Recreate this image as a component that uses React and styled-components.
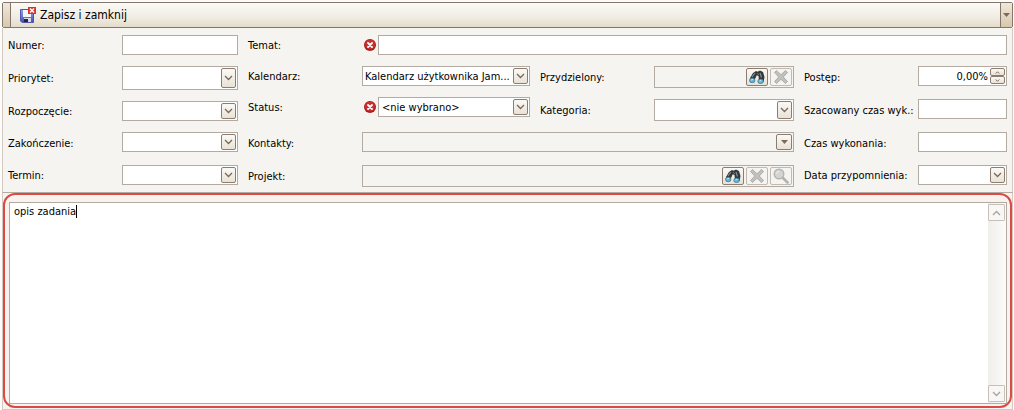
import React, { useLayoutEffect, useRef, useState } from 'react';
import styled, { createGlobalStyle } from 'styled-components';

const App = () => {
  return (
    <Page>
      <GlobalStyle />
      <Toolbar>
        <Grip />
        <ToolButton type="button">
          <SaveCloseIcon />
          Zapisz i zamknij
        </ToolButton>
        <Overflow type="button" aria-label="Więcej">
          <DownTriangle />
        </Overflow>
      </Toolbar>
      <Form>
        <Column>
          <TextField id="numer" label="Numer:" />
          <ComboField id="priorytet" label="Priorytet:" tall />
          <ComboField id="rozpoczecie" label="Rozpoczęcie:" />
          <ComboField id="zakonczenie" label="Zakończenie:" loose />
          <ComboField id="termin" label="Termin:" />
        </Column>
        <Column>
          <TextField id="temat" label="Temat:" error />
          <Details>
            <Column>
              <Pair>
                <Column>
                  <ComboField
                    id="kalendarz"
                    label="Kalendarz:"
                    value="Kalendarz użytkownika Jam..."
                  />
                  <ComboField id="status" label="Status:" value="<nie wybrano>" error />
                </Column>
                <Column>
                  <LookupField id="przydzielony" label="Przydzielony:" />
                  <ComboField id="kategoria" label="Kategoria:" loose medium />
                </Column>
              </Pair>
              <Row $loose>
                <Label htmlFor="kontakty">Kontakty:</Label>
                <Box $muted>
                  <Input id="kontakty" readOnly />
                  <DropButton type="button" aria-label="Wybierz kontakty">
                    <DownTriangle />
                  </DropButton>
                </Box>
              </Row>
              <LookupField id="projekt" label="Projekt:" preview />
            </Column>
            <Column>
              <Row $loose>
                <Label htmlFor="postep">Postęp:</Label>
                <Box>
                  <Input id="postep" defaultValue="0,00%" $right />
                  <Spinner>
                    <SpinButton type="button" aria-label="Zwiększ">
                      <Chevron up small />
                    </SpinButton>
                    <SpinButton type="button" aria-label="Zmniejsz">
                      <Chevron small />
                    </SpinButton>
                  </Spinner>
                </Box>
              </Row>
              <TextField id="szacowany" label="Szacowany czas wyk.:" loose />
              <TextField id="czas" label="Czas wykonania:" loose />
              <ComboField id="przypomnienie" label="Data przypomnienia:" />
            </Column>
          </Details>
        </Column>
      </Form>
      <Description />
    </Page>
  );
};

export default App;

const TextField = ({ id, label, error, loose }) => (
  <Row $loose={loose}>
    <Label htmlFor={id}>{label}</Label>
    {error && <ErrorIcon />}
    <Box>
      <Input id={id} />
    </Box>
  </Row>
);

const ComboField = ({ id, label, value = '', error, tall, medium, loose }) => (
  <Row $loose={loose}>
    <Label htmlFor={id}>{label}</Label>
    {error && <ErrorIcon />}
    <Combo $tall={tall} $medium={medium}>
      <Select id={id} $inset={error}>
        <option>{value}</option>
      </Select>
      <ComboArrow aria-hidden="true">
        <Chevron />
      </ComboArrow>
    </Combo>
  </Row>
);

const LookupField = ({ id, label, preview }) => (
  <Row>
    <Label htmlFor={id}>{label}</Label>
    <Box $muted $medium>
      <Input id={id} readOnly />
      <IconButton type="button" aria-label="Szukaj">
        <BinocularsIcon />
      </IconButton>
      <IconButton type="button" aria-label="Wyczyść" disabled>
        <ClearIcon />
      </IconButton>
      {preview && (
        <IconButton type="button" aria-label="Podgląd" disabled>
          <MagnifierIcon />
        </IconButton>
      )}
    </Box>
  </Row>
);

const Description = () => {
  const [text, setText] = useState('opis zadania');
  const [caret, setCaret] = useState(0);
  const area = useRef(null);

  useLayoutEffect(() => {
    const ctx = document.createElement('canvas').getContext('2d');
    ctx.font = getComputedStyle(area.current).font;
    setCaret(Math.floor(ctx.measureText(text.split('\n').pop()).width));
  }, [text]);

  return (
    <LowerPanel>
      <Highlight>
        <Editor>
          <TextArea
            ref={area}
            aria-label="Opis"
            value={text}
            onChange={(e) => setText(e.target.value)}
          />
          <Caret style={{ left: caret + 4 }} />
          <ScrollBar>
            <ScrollButton type="button" aria-label="W górę">
              <Chevron up />
            </ScrollButton>
            <ScrollButton type="button" aria-label="W dół">
              <Chevron />
            </ScrollButton>
          </ScrollBar>
        </Editor>
      </Highlight>
    </LowerPanel>
  );
};

const Chevron = ({ up, small }) => (
  <svg width={small ? 5 : 9} height={small ? 3 : 6} viewBox="0 0 9 6" aria-hidden="true">
    <path
      d={up ? 'M1 5L4.5 1.5L8 5' : 'M1 1L4.5 4.5L8 1'}
      fill="none"
      stroke="currentColor"
      strokeWidth={small ? 2 : 1.3}
    />
  </svg>
);

const DownTriangle = () => (
  <svg width="7" height="4" viewBox="0 0 7 4" aria-hidden="true">
    <path d="M0 0H7L3.5 4Z" fill="#7b6a5e" />
  </svg>
);

const ErrorIcon = () => (
  <ErrorSlot>
    <svg width="12" height="12" viewBox="0 0 12 12" role="img" aria-label="Błąd">
      <circle cx="6" cy="6" r="6" fill="#a91d1d" />
      <circle cx="6" cy="5.4" r="5" fill="#c92f2e" />
      <path d="M4 4L8 8M8 4L4 8" stroke="#fff" strokeWidth="1.8" strokeLinecap="round" />
    </svg>
  </ErrorSlot>
);

const SaveCloseIcon = () => (
  <svg width="16" height="16" viewBox="0 0 16 16" aria-hidden="true">
    <defs>
      <linearGradient id="disk" x1="0" y1="0" x2="0" y2="1">
        <stop offset="0" stopColor="#8fa0e4" />
        <stop offset="1" stopColor="#4a4fb4" />
      </linearGradient>
    </defs>
    <path d="M0.5 2.5H13.5V15.5H2L0.5 14Z" fill="url(#disk)" stroke="#5058ac" />
    <rect x="3" y="3" width="8" height="7" fill="#f2f4fc" />
    <rect x="4" y="11" width="7" height="4" fill="#d9dce6" />
    <rect x="4" y="12" width="4" height="3" fill="#23263c" />
    <rect x="8" y="0" width="8" height="7" fill="#d8322c" />
    <path d="M10 1.5L14 5.5M14 1.5L10 5.5" stroke="#fff" strokeWidth="1.6" />
  </svg>
);

const BinocularsIcon = () => (
  <svg width="16" height="14" viewBox="0 0 16 14" aria-hidden="true">
    <path d="M1 8L4 3L7 1L9 2L7 7L5 11L1 11Z" fill="#33383b" />
    <path d="M8 2L11 0.5L14 2L15.5 7L14.5 12L10 11L9.5 6L7 5Z" fill="#33383b" />
    <path d="M3 7L6 3M11 3L12.5 7.5" stroke="#858d91" strokeWidth="1.2" />
    <path d="M8 3L10 5" stroke="#6b7377" />
    <ellipse cx="3.2" cy="10.4" rx="2.8" ry="2.3" fill="#5fb4da" stroke="#3a5f70" strokeWidth="0.6" />
    <ellipse cx="11.6" cy="11.3" rx="2.8" ry="2.3" fill="#5fb4da" stroke="#3a5f70" strokeWidth="0.6" />
    <path d="M2 10L4 9.4M10.4 11L12.4 10.3" stroke="#c6ebf8" />
  </svg>
);

const ClearIcon = () => (
  <svg width="14" height="14" viewBox="0 0 14 14" aria-hidden="true">
    <path
      d="M2.5 0.5L7 4.7L11.5 0.5L13.5 2.5L9.3 7L13.5 11.5L11.5 13.5L7 9.3L2.5 13.5L0.5 11.5L4.7 7L0.5 2.5Z"
      fill="#c0c0be"
      stroke="#a2a2a0"
      strokeWidth="0.8"
    />
  </svg>
);

const MagnifierIcon = () => (
  <svg width="16" height="16" viewBox="0 0 16 16" aria-hidden="true">
    <path d="M9.5 9.5L14.5 14.5" stroke="#b2b2b0" strokeWidth="2.6" strokeLinecap="round" />
    <circle cx="6" cy="6" r="4.8" fill="#d4d4d3" stroke="#b4b4b2" strokeWidth="1.4" />
    <path d="M3.6 5.6A2.6 2.6 0 0 1 6 3.4" fill="none" stroke="#f4f4f3" />
  </svg>
);

const GlobalStyle = createGlobalStyle`
  *, *::before, *::after {
    box-sizing: border-box;
  }

  body {
    margin: 0;
    background: #fdfcfa;
  }

  button, input, select, textarea {
    font: inherit;
    color: inherit;
    margin: 0;
    padding: 0;
    outline: none;
  }
`;

const Page = styled.main`
  display: flex;
  flex-direction: column;
  min-height: 100vh;
  padding: 2px 1px 0 2px;
  font: 11px/14px 'DejaVu Sans Condensed', 'DejaVu Sans', sans-serif;
  color: #000;
`;

const Toolbar = styled.div`
  display: flex;
  height: 26px;
  border: 1px solid #85766b;
  border-radius: 2px;
  background: linear-gradient(#fbfaf7, #f0ece2 60%, #e4dccb);
`;

const Grip = styled.span`
  width: 8px;
  border-right: 1px solid #85766b;
  background: linear-gradient(#efe8da, #d6c8ae);
`;

const ToolButton = styled.button`
  display: flex;
  align-items: center;
  gap: 4px;
  padding-left: 9px;
  border: 0;
  background: none;
  font-size: 12px;
`;

const Overflow = styled.button`
  display: flex;
  align-items: center;
  justify-content: center;
  width: 12px;
  margin-left: auto;
  border: 0;
  border-left: 1px solid #85766b;
  background: linear-gradient(#efe8da, #d6c8ae);
`;

const Form = styled.form`
  display: grid;
  grid-template-columns: 230px 1fr;
  gap: 10px;
  padding: 7px 5px 5px;
  border: 1px solid #d3cbc0;
  border-top: 0;
  border-bottom-color: #b3aaa2;
  background: #f6f4f0;
`;

const Column = styled.div`
  display: flex;
  flex-direction: column;
  gap: 11px;
  min-width: 0;
`;

const Details = styled.div`
  display: grid;
  grid-template-columns: 546fr 203fr;
  gap: 10px;
`;

const Pair = styled.div`
  display: grid;
  grid-template-columns: 282fr 254fr;
  gap: 10px;
`;

const Row = styled.div`
  display: flex;
  align-items: flex-start;
  min-height: ${({ $loose }) => ($loose ? '22px' : '20px')};
`;

const Label = styled.label`
  flex: 0 0 114px;
  align-self: center;
  padding-top: 1px;
  white-space: nowrap;
`;

const ErrorSlot = styled.span`
  display: flex;
  flex: 0 0 16px;
  align-self: center;
  justify-content: center;
`;

const Box = styled.div`
  display: flex;
  flex: 1;
  gap: 2px;
  min-width: 0;
  height: ${({ $medium, $tall }) => ($tall ? '24px' : $medium ? '22px' : '20px')};
  padding: 1px;
  border: 1px solid #b3aaa2;
  background: ${({ $muted }) => ($muted ? '#f6f4f0' : '#fff')};
`;

const Input = styled.input`
  flex: 1;
  min-width: 0;
  padding-top: 1px;
  border: 0;
  background: transparent;
  text-align: ${({ $right }) => ($right ? 'right' : 'left')};
`;

// select and its arrow share one grid cell, so the whole field is clickable
const Combo = styled(Box)`
  display: grid;
  grid-template-columns: minmax(0, 1fr);
`;

const Select = styled.select`
  grid-area: 1 / 1;
  appearance: none;
  border: 0;
  padding-top: 1px;
  padding-left: ${({ $inset }) => ($inset ? '2px' : '1px')};
  background: transparent;
`;

const ComboArrow = styled.span`
  grid-area: 1 / 1;
  justify-self: end;
  display: flex;
  align-items: center;
  justify-content: center;
  width: 15px;
  border: 1px solid #8c7d72;
  border-radius: 2px;
  background: linear-gradient(#fbf9f5, #e9e2d5);
  color: #77685c;
  pointer-events: none;
`;

const DropButton = styled.button`
  display: flex;
  align-items: center;
  justify-content: center;
  width: 16px;
  border: 1px solid #8c7d72;
  border-radius: 2px;
  background: linear-gradient(#fbf9f5, #e9e2d5);
`;

const IconButton = styled(DropButton)`
  width: 22px;

  &:disabled {
    border-color: #c0bab3;
    background: #f6f4f0;
  }
`;

const Spinner = styled.span`
  display: flex;
  flex-direction: column;
  width: 15px;
`;

const SpinButton = styled(DropButton)`
  flex: 1;
  width: 100%;
  color: #77685c;
`;

const LowerPanel = styled.section`
  display: flex;
  flex: 1;
  padding-bottom: 1px;
  border: 1px solid #d3cbc0;
  border-top: 0;
  background: #f6f4f0;
`;

const Highlight = styled.div`
  display: flex;
  flex: 1;
  padding: 7px 3px 2px 4px;
  border: 2px solid #dc4a46;
  border-radius: 12px;
  background: #f8f3ee;
`;

const Editor = styled.div`
  position: relative;
  display: flex;
  flex: 1;
  border: 1px solid #b3aaa2;
  background: #fff;
`;

const TextArea = styled.textarea`
  flex: 1;
  padding: 2px 4px;
  border: 0;
  resize: none;
  background: transparent;
  caret-color: transparent;
`;

const Caret = styled.span`
  position: absolute;
  top: 2px;
  width: 1px;
  height: 13px;
  background: #000;
`;

const ScrollBar = styled.div`
  display: flex;
  flex-direction: column;
  justify-content: space-between;
  width: 18px;
  padding: 1px 1px 1px 0;
  background: linear-gradient(90deg, #efeeeb, #fbfbfa);
`;

const ScrollButton = styled.button`
  display: flex;
  align-items: center;
  justify-content: center;
  height: 17px;
  border: 1px solid #c6c0b9;
  border-radius: 1px;
  background: #f8f7f5;
  color: #aaa39b;
`;
